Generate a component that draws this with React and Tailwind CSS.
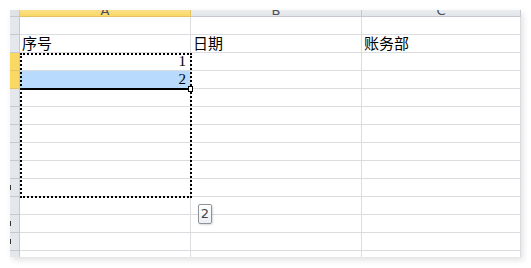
import React from 'react';

const cols = [171, 171, 159];
const rowCount = 14;

const HeaderCell = ({ label, active, width }) => (
  <div
    className={`h-[7px] overflow-hidden border-r border-b flex justify-center ${
      active
        ? 'bg-gradient-to-b from-[#fbe08a] to-[#f9d863] border-[#e5c365]'
        : 'bg-gradient-to-b from-[#eceef1] to-[#e1e4e8] border-[#c5c9cf]'
    }`}
    style={{ width }}
  >
    <span className="-mt-[7px] text-[13px] leading-[15px] text-[#4a4f57] font-['DejaVu_Sans',sans-serif]">
      {label}
    </span>
  </div>
);

const rowText = {
  1: ['序号', '日期', '账务部'],
};

export default function App() {
  return (
    <div className="w-[531px] h-[268px] bg-white relative overflow-hidden">
      <div className="ml-[10px] mt-[10px] w-[511px] h-[247px] bg-white shadow-[2px_3px_6px_rgba(0,0,0,0.12)] relative overflow-hidden font-['Noto_Sans_CJK_SC',sans-serif]">
        {/* column header */}
        <div className="flex">
          <div className="w-[10px] h-[7px] bg-[#dfe2e6] border-r border-b border-[#c5c9cf]" />
          <HeaderCell label="A" active width={cols[0]} />
          <HeaderCell label="B" width={cols[1]} />
          <HeaderCell label="C" width={cols[2]} />
        </div>

        {/* rows */}
        {Array.from({ length: rowCount }).map((_, r) => {
          const selected = r === 2 || r === 3;
          const texts = rowText[r];
          return (
            <div key={r} className="flex h-[18px]">
              <div
                className={`w-[10px] border-r border-b flex items-center ${
                  selected
                    ? 'bg-[#f9d863] border-[#e5c365]'
                    : 'bg-[#e4e7eb] border-[#c5c9cf]'
                }`}
              >
                {(r === 9 || r === 11 || r === 12) && (
                  <span className="w-[1px] h-[5px] bg-[#333]" />
                )}
              </div>
              {cols.map((w, c) => (
                <div
                  key={c}
                  className={`border-r border-b border-[#dadcdf] flex items-end px-[2px] text-[15px] leading-[18px] text-black ${
                    c === 0 && r === 3 ? 'bg-[#b7dafd]' : ''
                  } ${c === 0 && (r === 2 || r === 3) ? 'justify-end pr-[4px]' : ''}`}
                  style={{ width: w }}
                >
                  {texts && texts[c]}
                  {c === 0 && r === 2 && <span className="font-['Liberation_Serif',serif] text-[15px] leading-[17px]">1</span>}
                  {c === 0 && r === 3 && <span className="font-['Liberation_Serif',serif] text-[15px] leading-[17px]">2</span>}
                </div>
              ))}
            </div>
          );
        })}

        {/* copy marquee */}
        <div className="absolute left-[10px] top-[43px] w-[172px] h-[145px] border-2 border-dotted border-black pointer-events-none" />

        {/* active cell bottom border + fill handle */}
        <div className="absolute left-[10px] top-[78px] w-[168px] h-[2px] bg-black" />
        <div className="absolute left-[178px] top-[76px] w-[5px] h-[6px] bg-white border border-black" />

        {/* paste options button */}
        <div className="absolute left-[188px] top-[194px] w-[14px] h-[20px] rounded-[2px] border border-[#8f949b] bg-gradient-to-b from-white to-[#eceef1] flex items-center justify-center text-[13px] text-[#444] font-['DejaVu_Sans',sans-serif] shadow-[1px_1px_2px_rgba(0,0,0,0.15)]">
          2
        </div>
      </div>
    </div>
  );
}
